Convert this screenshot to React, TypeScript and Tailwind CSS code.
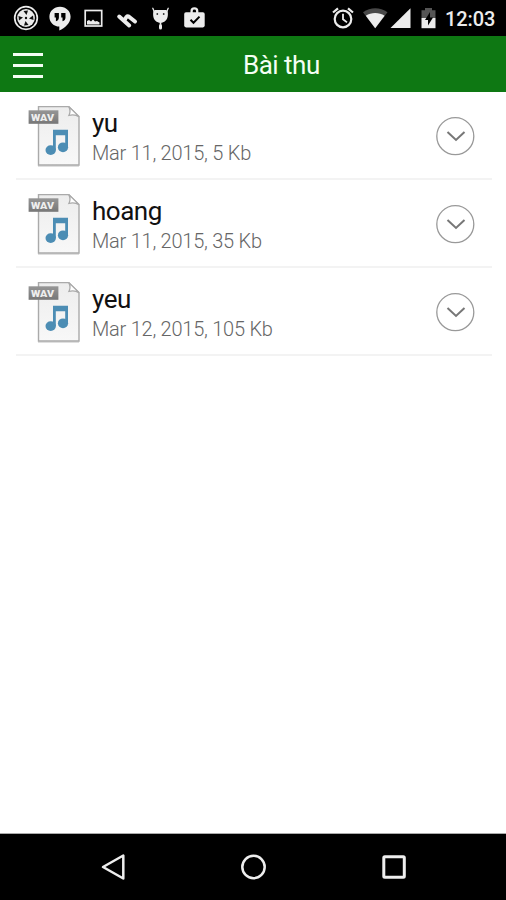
const files = [
  { name: 'yu', info: 'Mar 11, 2015, 5 Kb' },
  { name: 'hoang', info: 'Mar 11, 2015, 35 Kb' },
  { name: 'yeu', info: 'Mar 12, 2015, 105 Kb' },
];

function StatusBar() {
  return (
    <div className="flex h-9 shrink-0 items-center bg-black text-[#ececec]">
      <div className="ml-[10px] flex gap-[1.6px]">
        <svg width="32" height="36" viewBox="0 0 32 36" fill="none" stroke="currentColor">
          <circle cx="16" cy="18" r="11.3" strokeWidth="1.7" />
          <circle cx="16" cy="18" r="8.9" fill="currentColor" stroke="none" />
          <g fill="#111" stroke="none">
            <path d="M13.500 11l4.500-.5-1.500 4.500z" />
            <path d="M13.500 11l4.500-.5-1.500 4.500z" transform="rotate(90 16 18)" />
            <path d="M13.500 11l4.500-.5-1.500 4.500z" transform="rotate(180 16 18)" />
            <path d="M13.500 11l4.500-.5-1.500 4.500z" transform="rotate(270 16 18)" />
            <circle cx="16" cy="18" r="1.200" />
          </g>
        </svg>
        <svg width="32" height="36" viewBox="0 0 32 36" fill="currentColor">
          <path d="M16 6.700c-6 0-10.600 4.400-10.600 10S9.800 26.500 15.300 26.600V30.500C21 28 26.600 22.800 26.600 16.700 26.600 11.100 22 6.700 16 6.700z" />
          <path d="M10.600 13h4.300v4.600c0 1.900-1.100 3.200-3 3.700v-3.700h-1.300zM17.200 13h4.300v4.600c0 1.900-1.100 3.200-3 3.700v-3.700h-1.300z" fill="#000" />
        </svg>
        <svg width="32" height="36" viewBox="0 0 32 36">
          <rect x="8.200" y="10.500" width="16.500" height="15.500" fill="none" stroke="currentColor" strokeWidth="1.700" />
          <path d="M10 24.500v-3.500l2-1 2 1.500 2-2 2 2 2-.5 2.500 1.500v2z" fill="currentColor" />
        </svg>
        <svg width="32" height="36" viewBox="0 0 32 36" fill="none" stroke="currentColor" strokeWidth="4" strokeLinecap="round" strokeLinejoin="round">
          <path d="M8.200 16.500l10 9M13.700 20.500c.6-2.800 2.300-5.200 4.300-3.800l6 4.800" />
        </svg>
        <svg width="32" height="36" viewBox="0 0 32 36" fill="currentColor">
          <path d="M10 11L8.800 8.300M23 11l1.200-2.700" stroke="currentColor" strokeWidth="1.300" strokeLinecap="round" />
          <path d="M9.300 11.500c.5-1 1.300-1.500 2.700-1.500h9c1.400 0 2.200.5 2.700 1.500.8 5.500-.8 9.300-4.700 10.800l-1 .4h-3l-1-.4c-3.900-1.500-5.500-5.300-4.700-10.800z" />
          <path d="M16.500 22v2.500" stroke="currentColor" strokeWidth="1.600" />
          <path d="M16.500 25.500v2.500" stroke="currentColor" strokeWidth="3" strokeLinecap="round" />
          <circle cx="13.300" cy="14" r=".9" fill="#333" />
          <circle cx="19.700" cy="14" r=".9" fill="#333" />
        </svg>
        <svg width="32" height="36" viewBox="0 0 32 36" fill="none">
          <path d="M13.600 13v-2c0-3.400 5.600-3.400 5.600 0v2" stroke="currentColor" strokeWidth="2.300" />
          <rect x="6.200" y="12.200" width="20.500" height="15.200" rx="1.800" fill="currentColor" />
          <path d="M12.500 19.800l3 3 6-6.200" stroke="#000" strokeWidth="2" />
        </svg>
      </div>
      <svg className="ml-auto" width="30" height="36" viewBox="328 0 30 36" fill="none" stroke="currentColor">
        <circle cx="343" cy="19" r="8.300" strokeWidth="2.200" />
        <path d="M343 13.800v5.500l4 3.100" strokeWidth="1.800" />
        <path d="M333 12.500l5-4.200M353 12.500l-5-4.200" strokeWidth="2.200" />
      </svg>
      <svg className="ml-[2px]" width="53" height="36" viewBox="360 0 53 36" fill="currentColor">
        <path d="M363 12.300c7.500-5.400 17-5.400 24.500 0L375.200 28.200z" fill="#484848" />
        <path d="M365.800 15.700c5.500-3.600 13.300-3.600 18.800 0L375.200 28.200z" />
        <path d="M410.500 8.200v19.900h-20z" />
      </svg>
      <svg className="ml-[4px]" width="22" height="36" viewBox="417 0 22 36">
        <path d="M425 8h7v2.300h3.500V18h-14v-7.700h3.500z" fill="#555" />
        <path d="M421.500 18h14v10.200h-14z" fill="currentColor" />
        <path d="M430 12l-5 8h3v5.500l5-8h-3z" fill="#000" />
      </svg>
      <span className="ml-[6px] mr-[10px] mt-0.5 w-[51px] whitespace-nowrap text-[20px] font-medium leading-9 tracking-[-0.1px]">12:03</span>
    </div>
  );
}

function WavIcon() {
  return (
    <svg className="ml-3 shrink-0" width="53" height="64" viewBox="28 103.200 53 64">
      <defs>
        <linearGradient id="paper" x1="0" y1="0" x2="0" y2="1">
          <stop offset="0" stopColor="#ededed" />
          <stop offset="1" stopColor="#f8f8f8" />
        </linearGradient>
        <linearGradient id="label" x1="0" y1="0" x2="0" y2="1">
          <stop offset="0" stopColor="#969696" />
          <stop offset="1" stopColor="#777" />
        </linearGradient>
      </defs>
      <path d="M38 166.300h41" stroke="#d4d4d4" strokeWidth="1.500" />
      <path d="M38.500 106.800h30.300l10.200 10v48.400H38.500z" fill="url(#paper)" stroke="#aaa" strokeWidth="1.400" />
      <path d="M68.800 106.800c1.800 3.500 1.300 6.500.2 8.700 3.500-.8 7-.6 10 1.300z" fill="#fff" stroke="#aaa" strokeWidth="1.300" />
      <rect x="28.600" y="110.500" width="29.800" height="13.500" fill="url(#label)" />
      <text x="31" y="121" fontSize="9.500" fontWeight="900" fill="#eee" textLength="23" lengthAdjust="spacingAndGlyphs">WAV</text>
      <g fill="#4c8db4">
        <path d="M53 130h15v17.500h-2.800V135.500H55.800v15H53z" />
        <ellipse cx="50.700" cy="150.300" rx="5.200" ry="4.900" />
        <ellipse cx="63" cy="147.500" rx="5.100" ry="4.900" />
      </g>
    </svg>
  );
}

export default function App() {
  return (
    <div className="flex h-[900px] w-[506px] flex-col overflow-hidden bg-white font-[Roboto,sans-serif]">
      <StatusBar />
      <header className="flex h-14 shrink-0 items-center bg-[#0e7813] px-[13px]">
        <div className="mt-[3px] flex w-[30px] flex-col gap-2">
          <span className="h-[3px] bg-[#f4fff4]" />
          <span className="h-[3px] bg-[#f4fff4]" />
          <span className="h-[3px] bg-[#f4fff4]" />
        </div>
        <h1 className="ml-[200px] mt-px whitespace-nowrap text-[26px] font-normal leading-[56px] tracking-[-0.500px] text-[#f4fff4]">Bài thu</h1>
      </header>
      <main className="flex flex-1 flex-col pl-4 pr-[14px]">
        {files.map((file) => (
          <div key={file.name} className="flex h-[88px] shrink-0 items-center border-b-2 border-[#f3f3f3]">
            <WavIcon />
            <div className="ml-[11px] mt-1 flex flex-col">
              <span className="whitespace-nowrap text-[26px] leading-[32px] tracking-[-0.500px] text-[#111]">{file.name}</span>
              <span className="whitespace-nowrap text-[20px] font-light leading-[28px] tracking-[-0.240px] text-[#666]">{file.info}</span>
            </div>
            <svg className="ml-auto mr-[17px] mt-0.5" width="40" height="40" viewBox="0 0 40 40" fill="none">
              <circle cx="20.300" cy="20.200" r="18.500" stroke="#999" strokeWidth="1.300" />
              <path d="M12.500 16l8.500 8 8.500-8" stroke="#777" strokeWidth="2" />
            </svg>
          </div>
        ))}
      </main>
      <nav className="flex h-[67px] shrink-0 items-center border-t border-[#aaa] bg-black">
        <svg className="ml-[97px]" width="32" height="32" viewBox="0 0 32 32" fill="none" stroke="#eee" strokeWidth="2.500" strokeLinejoin="round">
          <path d="M26.300 4.500v23L6 16z" />
        </svg>
        <svg className="ml-[109px]" width="32" height="32" viewBox="0 0 32 32" fill="none" stroke="#eee" strokeWidth="2.500">
          <circle cx="15.500" cy="16" r="11.200" />
        </svg>
        <svg className="ml-[108px]" width="32" height="32" viewBox="0 0 32 32" fill="none" stroke="#eee" strokeWidth="3">
          <rect x="5.800" y="5.700" width="20.500" height="20.500" rx="1" />
        </svg>
      </nav>
    </div>
  );
}
